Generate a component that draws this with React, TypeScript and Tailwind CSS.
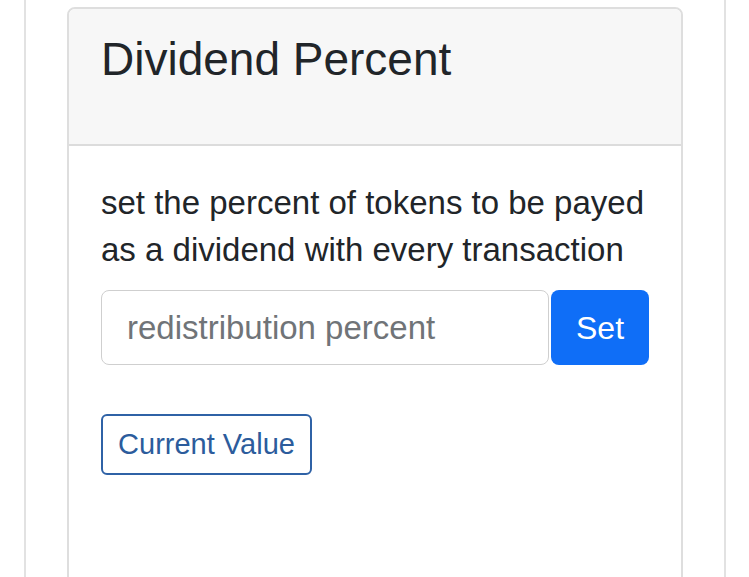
export default function App() {
  return (
    <div className="h-[577px] overflow-hidden bg-white font-['Liberation_Sans',Arial,sans-serif]">
      <div className="ml-[24px] h-[577px] w-[702px] border-x-2 border-[#e2e2e2] px-[41px] pt-[7px]">
        <div className="h-[600px] rounded-t-[8px] border-2 border-[#dedede]">
          <div className="h-[137px] rounded-t-[6px] border-b-2 border-[#dcdcdc] bg-[#f7f7f7] px-[32px] pt-[23px]">
            <h3 className="text-[46px] leading-[1.2] text-[#212529]">Dividend Percent</h3>
          </div>
          <div className="px-[32px] pt-[33px]">
            <p className="text-[33px] leading-[47px] text-[#212529]">
              set the percent of tokens to be payed as a dividend with every transaction
            </p>
            <div className="mt-[17px] flex h-[75px] gap-[2px]">
              <input
                className="w-[448px] rounded-[8px] border border-[#cfcfcf] px-[25px] text-[33px] text-[#212529] outline-none placeholder:text-[#707478]"
                placeholder="redistribution percent"
              />
              <button className="w-[100px] rounded-[8px] bg-[#0f6ef7] text-[32px] text-white">Set</button>
            </div>
            <button className="mt-[49px] h-[61px] w-[211px] rounded-[6px] border-2 border-[#2f62a6] text-[29px] text-[#2c5c9c]">
              Current Value
            </button>
          </div>
        </div>
      </div>
    </div>
  );
}
